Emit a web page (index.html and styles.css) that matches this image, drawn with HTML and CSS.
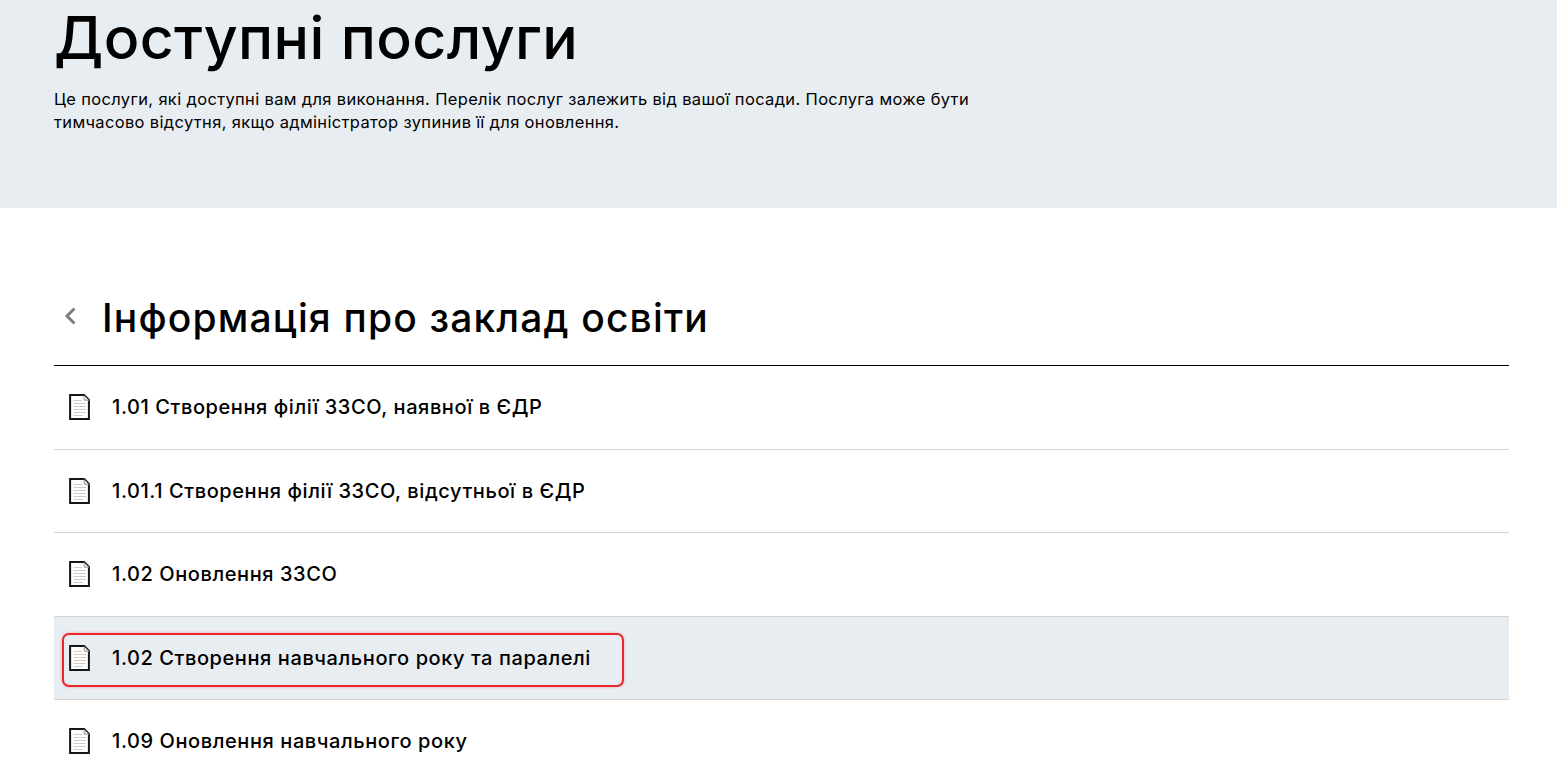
FILE: index.html
```html
<!DOCTYPE html>
<html lang="uk">
<head>
<meta charset="utf-8">
<title>Доступні послуги</title>
<link rel="stylesheet" href="styles.css">
</head>
<body>
<svg class="defs" width="0" height="0" aria-hidden="true">
  <symbol id="doc" viewBox="0 0 21 26">
    <path d="M1.1 1.1H15.2L19.9 5.8V24.9H1.1Z" fill="#fff" stroke="#151515" stroke-width="2"/>
    <path d="M15.2 1.5V6.2H19.9" fill="#e8e8e8" stroke="#999" stroke-width="1"/>
    <path d="M4.5 6.5H13M4.5 9.5H17M4.5 12.5H17M4.5 15.5H17M4.5 18.5H17M4.5 21.5H14" stroke="#cdcdcd" stroke-width="1"/>
  </symbol>
</svg>
<header class="hero">
  <h1 class="hero-title">Доступні послуги</h1>
  <p class="hero-text">Це послуги, які доступні вам для виконання. Перелік послуг залежить від вашої посади. Послуга може бути тимчасово відсутня, якщо адміністратор зупинив її для оновлення.</p>
</header>
<main class="content">
  <div class="section-head">
    <svg class="back" viewBox="0 0 12 18" aria-hidden="true"><path d="M10.5 1.5L3 9L10.5 16.5" fill="none" stroke="#7d7d7d" stroke-width="3"/></svg>
    <h2 class="section-title">Інформація про заклад освіти</h2>
  </div>
  <ul class="list">
    <li class="row"><svg class="doc"><use href="#doc"/></svg><span>1.01 Створення філії ЗЗСО, наявної в ЄДР</span></li>
    <li class="row"><svg class="doc"><use href="#doc"/></svg><span>1.01.1 Створення філії ЗЗСО, відсутньої в ЄДР</span></li>
    <li class="row"><svg class="doc"><use href="#doc"/></svg><span>1.02 Оновлення ЗЗСО</span></li>
    <li class="row row-active"><svg class="doc"><use href="#doc"/></svg><span>1.02 Створення навчального року та паралелі</span><i class="mark"></i></li>
    <li class="row"><svg class="doc"><use href="#doc"/></svg><span>1.09 Оновлення навчального року</span></li>
  </ul>
</main>
</body>
</html>
```
FILE: styles.css
```css
html, body {
  margin: 0;
  padding: 0;
  height: 777px;
  overflow: hidden;
  background: #fff;
  color: #000;
  font-family: Inter, "Liberation Sans", sans-serif;
}
.defs { display: block; height: 0; }
.hero {
  height: 208px;
  box-sizing: border-box;
  padding: 0 54px;
  background: #e8edf2;
  overflow: hidden;
}
.hero-title {
  margin: 0;
  padding-top: 3px;
  font-size: 59px;
  line-height: 70px;
  font-weight: 500;
  letter-spacing: 0.37px;
}
.hero-text {
  margin: 15px 0 0;
  width: 940px;
  font-size: 16.5px;
  line-height: 22.5px;
  font-weight: 400;
  letter-spacing: 0.34px;
}
.content { padding: 0 48px 0 54px; }
.section-head {
  display: flex;
  align-items: center;
  height: 158px;
  box-sizing: border-box;
  border-bottom: 1px solid #000;
  padding-top: 86px;
  padding-bottom: 24px;
}
.back { width: 12px; height: 18px; margin: -3px 26px 0 10px; flex: none; }
.section-title {
  margin: 0;
  font-size: 39px;
  line-height: 46px;
  font-weight: 500;
  letter-spacing: 1.15px;
}
.list { margin: 0; padding: 0; list-style: none; }
.row {
  position: relative;
  display: flex;
  align-items: center;
  height: 83.5px;
  box-sizing: border-box;
  border-bottom: 1px solid #d4d4d4;
  padding-left: 15px;
  font-size: 20px;
  font-weight: 500;
  letter-spacing: 0.58px;
}
.row-active { background: #e8edf2; }
.doc { width: 21px; height: 26px; margin-right: 22px; flex: none; }
.mark {
  position: absolute;
  left: 8px;
  top: 16px;
  width: 562px;
  height: 54px;
  box-sizing: border-box;
  border: 2px solid #e8262c;
  border-radius: 7px;
  box-shadow: 0 0 3px rgba(232, 38, 44, .35);
}
```
